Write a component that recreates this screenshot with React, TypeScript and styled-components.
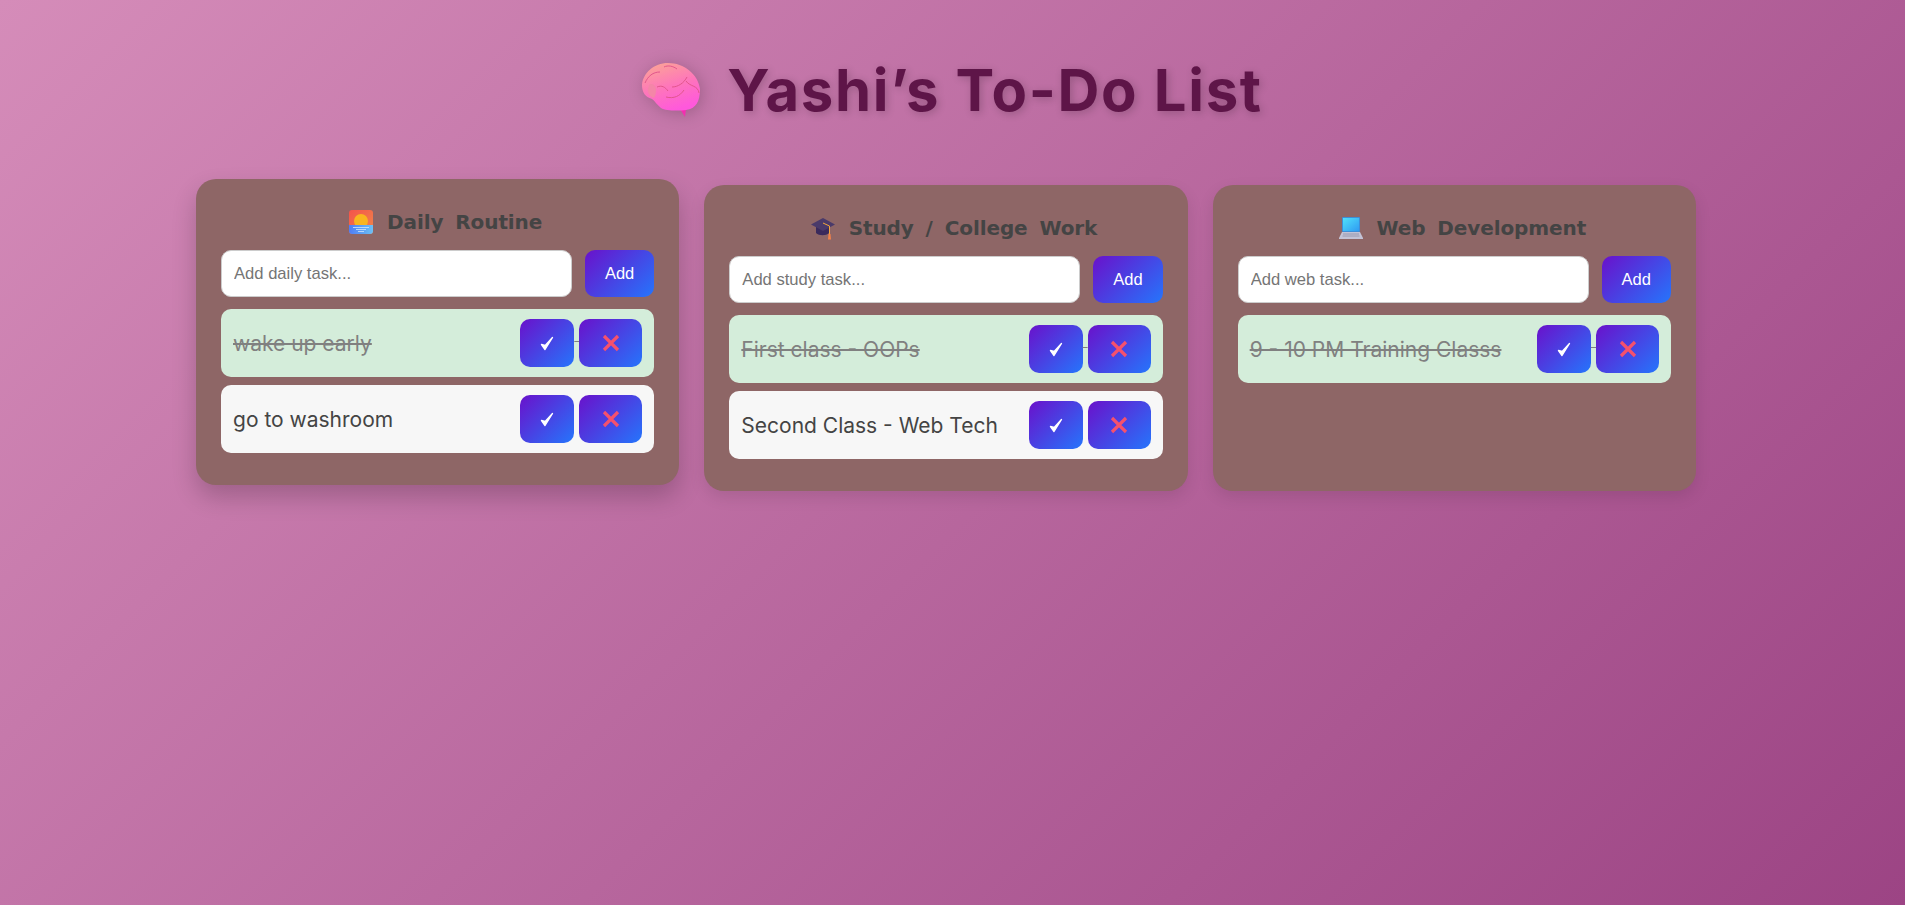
import React, { FC, useState } from 'react';
import styled, { createGlobalStyle } from 'styled-components';

const GlobalStyle = createGlobalStyle`
  html, body {
    margin: 0;
    padding: 0;
    min-height: 100%;
  }
  body {
    font-family: Inter, 'Liberation Sans', sans-serif;
  }
`;

const Page = styled.div`
  box-sizing: border-box;
  height: 905px;
  overflow: hidden;
  padding-top: 50px;
  background: linear-gradient(135deg, #d58cb9 0%, #9c4484 100%);
`;

const Title = styled.h1`
  display: flex;
  align-items: center;
  justify-content: center;
  gap: 27px;
  height: 80px;
  margin: 0 0 55px;
  font-family: Inter, sans-serif;
  font-size: 58px;
  font-weight: 700;
  letter-spacing: 1.7px;
  color: #5e1548;
  text-shadow: 2px 2px 8px rgba(0, 0, 0, 0.2);
`;

const BrainSvg = styled.svg`
  filter: drop-shadow(2px 2px 8px rgba(0, 0, 0, 0.2));
`;

const Board = styled.div`
  display: grid;
  grid-template-columns: repeat(3, 1fr);
  gap: 25px;
  width: 1500px;
  margin-left: 196px;
`;

const Card = styled.section<{ $lifted?: boolean }>`
  box-sizing: border-box;
  padding: 25px 25px 24px;
  border-radius: 20px;
  background: #8e6666;
  box-shadow: ${(p) =>
    p.$lifted ? '0 12px 24px rgba(0, 0, 0, 0.2)' : '0 6px 16px rgba(0, 0, 0, 0.1)'};
  transform: ${(p) => (p.$lifted ? 'translateY(-6px)' : 'none')};
`;

const CardHeading = styled.h2`
  display: flex;
  align-items: center;
  justify-content: center;
  gap: 14px;
  box-sizing: border-box;
  height: 32px;
  margin: 0 0 14px;
  padding: 4px 0 0 16px;
  font-family: 'DejaVu Sans', sans-serif;
  font-size: 20px;
  font-weight: 700;
  letter-spacing: -0.1px;
  word-spacing: 5px;
  color: #444;
`;

const AddRow = styled.form`
  display: flex;
  gap: 13px;
  margin-bottom: 12px;
`;

const TaskInput = styled.input`
  box-sizing: border-box;
  flex: 1;
  min-width: 0;
  height: 47px;
  padding: 0 12px;
  border: 1px solid #ccc;
  border-radius: 10px;
  background: #fff;
  font-family: 'Liberation Sans', Arial, sans-serif;
  font-size: 16.6px;
  outline: none;
`;

const GradientButton = styled.button`
  box-sizing: border-box;
  border: none;
  border-radius: 10px;
  background: linear-gradient(135deg, #6a11cb, #2575fc);
  color: #fff;
  cursor: pointer;
`;

const AddButton = styled(GradientButton)`
  width: 69.5px;
  height: 47px;
  font-family: 'Liberation Sans', Arial, sans-serif;
  font-size: 16.5px;
`;

const TaskList = styled.ul`
  margin: 0;
  padding: 0;
  list-style: none;
`;

const TaskRow = styled.li<{ $done?: boolean }>`
  display: flex;
  align-items: center;
  justify-content: space-between;
  box-sizing: border-box;
  height: 68px;
  margin-bottom: 8px;
  padding: 0 12px;
  border-radius: 10px;
  background: ${(p) => (p.$done ? '#d4edda' : '#f7f7f7')};
  color: ${(p) => (p.$done ? '#808080' : '#444')};
  font-family: Inter, sans-serif;
  font-size: 21px;
  text-decoration: ${(p) => (p.$done ? 'line-through' : 'none')};
`;

const Actions = styled.div`
  font-size: 18px;
  white-space: nowrap;
`;

const IconButton = styled(GradientButton)<{ $wide?: boolean }>`
  display: inline-flex;
  align-items: center;
  justify-content: center;
  width: ${(p) => (p.$wide ? '63px' : '54px')};
  height: 48px;
  padding: 0;
  vertical-align: middle;
`;

const CheckIcon: FC = () => (
  <svg width="14" height="15" viewBox="0 0 14 15" aria-hidden="true">
    <path d="M1.5 8.5 L5 13.5 L12.5 1.5 L5.2 9.5 Z" fill="#fff" stroke="#fff" strokeWidth="1.4" strokeLinejoin="round" />
  </svg>
);

const CrossIcon: FC = () => (
  <svg width="18" height="18" viewBox="0 0 18 18" aria-hidden="true">
    <path d="M2 2 L16 16 M16 2 L2 16" stroke="#f5516d" strokeWidth="3.2" fill="none" />
  </svg>
);

const BrainEmoji: FC = () => (
  <BrainSvg width="58" height="54" viewBox="0 0 58 54" aria-hidden="true">
    <defs>
      <linearGradient id="brainFill" x1="0.15" y1="0" x2="0.55" y2="1">
        <stop offset="0" stopColor="#fca595" />
        <stop offset="0.55" stopColor="#fe74bc" />
        <stop offset="1" stopColor="#ff58dc" />
      </linearGradient>
    </defs>
    <path d="M38 46 L44 46 L43 54 Z" fill="#f22fb0" />
    <path
      d="M26 0 C42 0 56 11 58 26 C58 38 54 46 44 47 C36 48 24 48 19 45 C15 42 13 38 10 36 C3 34 0 29 0 22 C1 10 12 0 26 0 Z"
      fill="url(#brainFill)"
    />
    <path
      d="M3 20 C6 13 11 9 18 9 M22 4 C26 2 31 3 35 6 M30 24 C36 24 42 20 45 14 M44 18 C48 24 56 22 57 30 M15 24 C20 22 23 24 26 28 M24 34 C32 36 38 33 42 27"
      stroke="#e2568c"
      strokeWidth="1"
      fill="none"
    />
    <path d="M8 21 C14 20 16 28 12 35 C6 34 4 26 8 21 Z" fill="#f486a8" />
  </BrainSvg>
);

const SunriseEmoji: FC = () => (
  <svg width="24" height="24" viewBox="0 0 24 24" aria-hidden="true">
    <defs>
      <linearGradient id="sunSky" x1="0" y1="0" x2="1" y2="1">
        <stop offset="0" stopColor="#f4534a" />
        <stop offset="1" stopColor="#f0884a" />
      </linearGradient>
      <linearGradient id="sunSea" x1="0" y1="0" x2="1" y2="0">
        <stop offset="0" stopColor="#4f7df5" />
        <stop offset="1" stopColor="#6cc0f5" />
      </linearGradient>
    </defs>
    <rect width="24" height="24" rx="3" fill="url(#sunSky)" />
    <circle cx="12" cy="11" r="7" fill="#f9b51f" />
    <path d="M0 15 H24 V21 a3 3 0 0 1 -3 3 H3 a3 3 0 0 1 -3 -3 Z" fill="url(#sunSea)" />
    <path d="M4 17.5 H20 M7 19.5 H17 M9 21.5 H15" stroke="#cfe6fb" strokeWidth="0.8" />
  </svg>
);

const CapEmoji: FC = () => (
  <svg width="24" height="24" viewBox="0 0 24 24" aria-hidden="true">
    <path d="M5 11 V17 C8 20 15 20 18 17 V11 Z" fill="#3a2a5c" />
    <path d="M0 8.5 L12 2 L24 8.5 L12 15 Z" fill="#4a3a6a" />
    <path d="M12 7 L18.5 10 V18" stroke="#f2a73b" strokeWidth="1" fill="none" />
    <path d="M17.5 18 H19.5 L20 23.5 H17 Z" fill="#f3824a" />
  </svg>
);

const LaptopEmoji: FC = () => (
  <svg width="24" height="24" viewBox="0 0 24 24" aria-hidden="true">
    <defs>
      <linearGradient id="laptopScreen" x1="0" y1="0" x2="1" y2="1">
        <stop offset="0" stopColor="#4fe0fb" />
        <stop offset="1" stopColor="#2f9bf2" />
      </linearGradient>
    </defs>
    <rect x="3" y="1" width="18" height="15" rx="1" fill="#3d8ed8" />
    <rect x="4" y="2" width="16" height="13" fill="url(#laptopScreen)" />
    <path d="M3 16 H21 L24 22 V23 H0 V22 Z" fill="#c3c3d6" />
    <path d="M4 18 H20 M3.5 20 H20.5" stroke="#8d8da6" strokeWidth="0.8" />
  </svg>
);

type Task = { id: number; text: string; done: boolean };

type ColumnProps = {
  icon: React.ReactNode;
  title: string;
  placeholder: string;
  initial: Task[];
  lifted?: boolean;
};

const Column: FC<ColumnProps> = ({ icon, title, placeholder, initial, lifted }) => {
  const [tasks, setTasks] = useState<Task[]>(initial);
  const [draft, setDraft] = useState('');

  const add = (event: React.FormEvent) => {
    event.preventDefault();
    if (!draft.trim()) return;
    setTasks([...tasks, { id: Date.now(), text: draft, done: false }]);
    setDraft('');
  };

  return (
    <Card $lifted={lifted}>
      <CardHeading>
        {icon}
        <span>{title}</span>
      </CardHeading>
      <AddRow onSubmit={add}>
        <TaskInput
          placeholder={placeholder}
          value={draft}
          onChange={(event) => setDraft(event.target.value)}
        />
        <AddButton type="submit">Add</AddButton>
      </AddRow>
      <TaskList>
        {tasks.map((task) => (
          <TaskRow key={task.id} $done={task.done}>
            <span>{task.text}</span>
            <Actions>
              <IconButton
                aria-label="Toggle"
                onClick={() =>
                  setTasks(tasks.map((t) => (t.id === task.id ? { ...t, done: !t.done } : t)))
                }
              >
                <CheckIcon />
              </IconButton>{' '}
              <IconButton
                $wide
                aria-label="Delete"
                onClick={() => setTasks(tasks.filter((t) => t.id !== task.id))}
              >
                <CrossIcon />
              </IconButton>
            </Actions>
          </TaskRow>
        ))}
      </TaskList>
    </Card>
  );
};

export default function App() {
  return (
    <Page>
      <GlobalStyle />
      <Title>
        <BrainEmoji />
        <span>Yashi’s To-Do List</span>
      </Title>
      <Board>
        <Column
          lifted
          icon={<SunriseEmoji />}
          title="Daily Routine"
          placeholder="Add daily task..."
          initial={[
            { id: 1, text: 'wake up early', done: true },
            { id: 2, text: 'go to washroom', done: false },
          ]}
        />
        <Column
          icon={<CapEmoji />}
          title="Study / College Work"
          placeholder="Add study task..."
          initial={[
            { id: 3, text: 'First class - OOPs', done: true },
            { id: 4, text: 'Second Class - Web Tech', done: false },
          ]}
        />
        <Column
          icon={<LaptopEmoji />}
          title="Web Development"
          placeholder="Add web task..."
          initial={[{ id: 5, text: '9 - 10 PM Training Classs', done: true }]}
        />
      </Board>
    </Page>
  );
}
